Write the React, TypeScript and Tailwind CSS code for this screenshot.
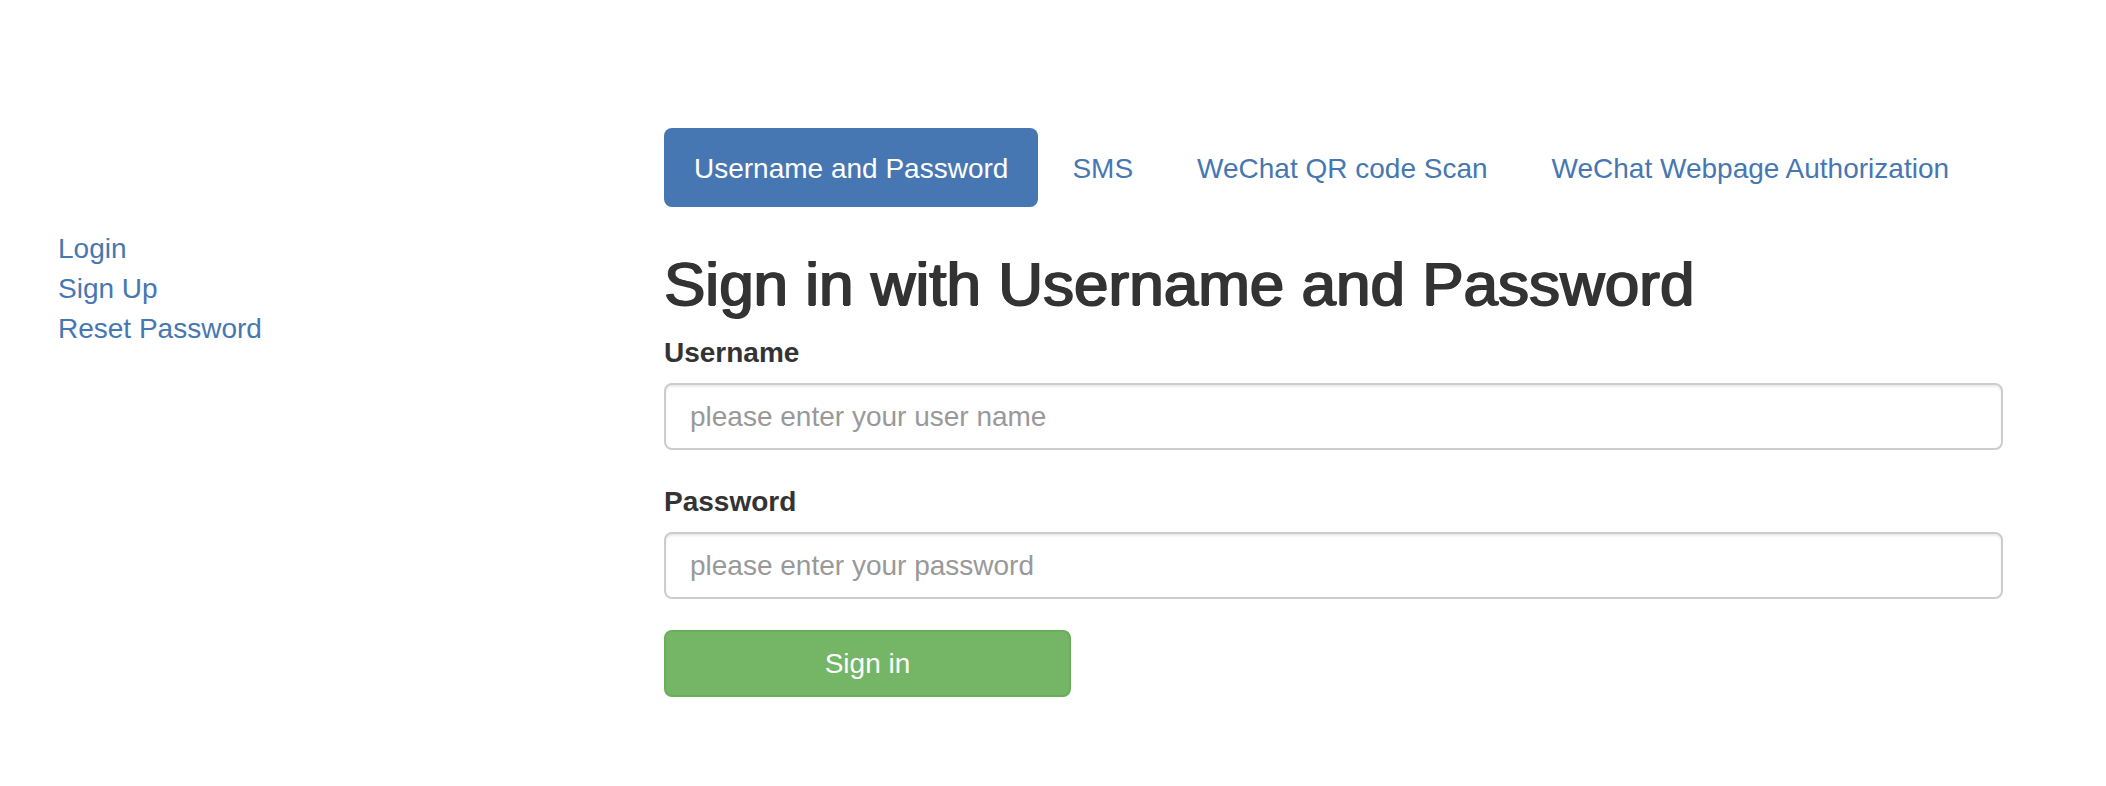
import { useState } from 'react';

const tabs = ['Username and Password', 'SMS', 'WeChat QR code Scan', 'WeChat Webpage Authorization'];

const sideLinks = ['Login', 'Sign Up', 'Reset Password'];

export default function App() {
  const [active, setActive] = useState(0);

  return (
    <div className="flex min-h-[786px] w-full bg-white font-['Liberation_Sans',Arial,sans-serif] text-[28px] leading-[40px] text-[#333333]">
      {/* side menu */}
      <aside className="w-[664px] shrink-0 pl-[58px] pt-[229px]">
        <ul className="flex flex-col">
          {sideLinks.map((link) => (
            <li key={link}>
              <a href="#" className="text-[#4677b3] hover:underline">
                {link}
              </a>
            </li>
          ))}
        </ul>
      </aside>

      {/* main form */}
      <main className="w-[1339px] shrink-0 pt-[128px]">
        <nav className="flex gap-[4px]">
          {tabs.map((tab, i) => (
            <button
              key={tab}
              type="button"
              onClick={() => setActive(i)}
              className={`h-[79px] rounded-[8px] px-[30px] pt-[2px] leading-[39px] ${
                i === active ? 'bg-[#4677b3] text-white' : 'text-[#4677b3]'
              }`}
            >
              {tab}
            </button>
          ))}
        </nav>

        <h1 className="mt-[43px] text-[62px] leading-[68px] font-medium text-[#333333] [text-shadow:1px_0_0_#333333,-1px_0_0_#333333,0_0.5px_0_#333333]">
          Sign in with Username and Password
        </h1>

        <form className="mt-[15px]" onSubmit={(e) => e.preventDefault()}>
          <div className="mb-[32px]">
            <label className="mb-[10px] block font-bold">Username</label>
            <input
              type="text"
              placeholder="please enter your user name"
              className="block h-[67px] w-full rounded-[8px] border-2 border-[#cccccc] px-[24px] shadow-[inset_0_2px_2px_rgba(0,0,0,0.075)] outline-none placeholder:text-[#999999]"
            />
          </div>
          <div className="mb-[31px]">
            <label className="mb-[10px] block font-bold">Password</label>
            <input
              type="password"
              placeholder="please enter your password"
              className="block h-[67px] w-full rounded-[8px] border-2 border-[#cccccc] px-[24px] shadow-[inset_0_2px_2px_rgba(0,0,0,0.075)] outline-none placeholder:text-[#999999]"
            />
          </div>
          <button
            type="submit"
            className="h-[67px] w-[407px] rounded-[8px] border-2 border-[#68ae5b] bg-[#74b566] text-white"
          >
            Sign in
          </button>
        </form>
      </main>
    </div>
  );
}
